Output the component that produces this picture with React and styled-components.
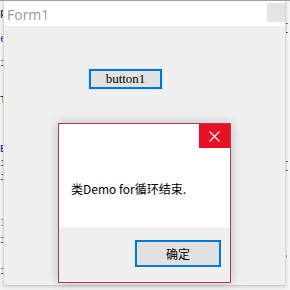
import React from "react";
import styled, { createGlobalStyle } from "styled-components";

const GlobalStyle = createGlobalStyle`
  body {
    margin: 0;
    background: #f4f4f4;
  }
`;

// code lines of the editor that peek out left of the form
const codeLines = [
  { gap: 0, text: "p", color: "#000" },
  { gap: 14, text: "e", color: "#1a1aa6" },
  { gap: 12, text: "i", color: "#1a1aa6" },
  { gap: 25, text: "T", color: "#000" },
  { gap: 37, text: "E", color: "#1a1aa6" },
  { gap: 2, text: "i", color: "#1a1aa6" },
  { gap: 2, text: "i", color: "#1a1aa6" },
  { gap: 34, text: "I", color: "#2b91af" },
  { gap: 5, text: "i", color: "#1a1aa6" },
  { gap: 19, text: "i", color: "#1a1aa6" },
];

// and the ones to the right of it
const rightLines = [
  { gap: 15, text: "[" },
  { gap: 126, text: "[" },
  { gap: 76, text: "." },
];

const App = () => {
  return (
    <>
      <GlobalStyle />
      <Screen>
        <Editor>
          <CodeColumn>
            {codeLines.map((line, i) => (
              <CodeLine key={i} gap={line.gap} color={line.color}>
                {line.text}
              </CodeLine>
            ))}
          </CodeColumn>
          <RightColumn>
            {rightLines.map((line, i) => (
              <CodeLine key={i} gap={line.gap} color="#222">
                {line.text}
              </CodeLine>
            ))}
          </RightColumn>
        </Editor>

        <FormWindow>
          <TitleBar>
            <Title>Form1</Title>
            <CloseBox />
          </TitleBar>
          <Client>
            <Button1>button1</Button1>
          </Client>
        </FormWindow>

        <Dialog>
          <DialogBody>
            <DialogHeader>
              <DialogClose>
                <svg width="11" height="11" viewBox="0 0 11 11">
                  <path d="M0.5 0.5 L10.5 10.5 M10.5 0.5 L0.5 10.5" stroke="#fff" strokeWidth="1.1" />
                </svg>
              </DialogClose>
            </DialogHeader>
            <Message>类Demo for循环结束.</Message>
          </DialogBody>
          <DialogFooter>
            <OkButton>确定</OkButton>
          </DialogFooter>
        </Dialog>
      </Screen>
    </>
  );
};

const Screen = styled.div`
  position: relative;
  width: 290px;
  height: 290px;
  overflow: hidden;
  background: #f4f4f4;
  border-top: 1px solid #a0a0a0;
  box-sizing: border-box;
`;

const Editor = styled.div`
  display: flex;
  justify-content: space-between;
  padding-top: 6px;
`;

const CodeColumn = styled.div`
  display: flex;
  flex-direction: column;
`;

const RightColumn = styled.div`
  display: flex;
  flex-direction: column;
  padding-right: 1px;
`;

const CodeLine = styled.div`
  margin-top: ${(props) => props.gap}px;
  height: 12px;
  font-family: "Liberation Mono", monospace;
  font-size: 11px;
  line-height: 12px;
  color: ${(props) => props.color};
`;

const FormWindow = styled.div`
  position: absolute;
  left: 3px;
  top: 0;
  width: 283px;
  height: 285px;
  display: flex;
  flex-direction: column;
  background: #f0f0f0;
  border-left: 1px solid #d6d6d6;
  border-right: 1px solid #d6d6d6;
  border-bottom: 1px solid #d0d0d0;
  box-sizing: border-box;
  box-shadow: 0 1px 3px rgba(0, 0, 0, 0.15);
`;

const TitleBar = styled.div`
  height: 25px;
  flex-shrink: 0;
  display: flex;
  align-items: center;
  background: #fff;
  padding-left: 3px;
`;

const Title = styled.span`
  font-family: "Open Sans", "Noto Sans", sans-serif;
  font-size: 14px;
  color: #9a9a9a;
  margin-top: 1px;
`;

const CloseBox = styled.div`
  margin-left: auto;
  margin-top: 2px;
  width: 18px;
  height: 19px;
  background: #e4e4e4;
  align-self: flex-start;
`;

const Client = styled.div`
  flex: 1;
  display: flex;
  align-items: flex-start;
  padding: 43px 0 0 85px;
`;

const Button1 = styled.div`
  width: 73px;
  height: 20px;
  box-sizing: border-box;
  border: 2px solid #0078d7;
  background: #e1e1e1;
  display: flex;
  align-items: center;
  justify-content: center;
  font-family: "Liberation Serif", serif;
  font-size: 13px;
  color: #000;
  box-shadow: 0 0 0 1px #cde6f7;
`;

const Dialog = styled.div`
  position: absolute;
  left: 58px;
  top: 122px;
  width: 173px;
  height: 160px;
  box-sizing: border-box;
  border: 1px solid #b0395c;
  display: flex;
  flex-direction: column;
  box-shadow: 0 0 10px rgba(0, 0, 0, 0.22);
`;

const DialogBody = styled.div`
  flex: 1;
  background: #fff;
  display: flex;
  flex-direction: column;
`;

const DialogHeader = styled.div`
  display: flex;
  justify-content: flex-end;
`;

const DialogClose = styled.div`
  width: 31px;
  height: 24px;
  background: #e81123;
  display: flex;
  align-items: center;
  justify-content: center;
`;

const Message = styled.div`
  margin-top: 33px;
  padding-left: 12px;
  font-family: "Noto Sans CJK SC", "Noto Sans", sans-serif;
  font-size: 12px;
  line-height: 16px;
  color: #000;
`;

const DialogFooter = styled.div`
  height: 55px;
  flex-shrink: 0;
  background: #f0f0f0;
  display: flex;
  justify-content: flex-end;
  align-items: flex-start;
  padding: 13px 9px 0 0;
  box-sizing: border-box;
`;

const OkButton = styled.div`
  width: 86px;
  height: 27px;
  box-sizing: border-box;
  border: 2px solid #0078d7;
  background: #e1e1e1;
  display: flex;
  align-items: center;
  justify-content: center;
  font-family: "Noto Sans CJK SC", sans-serif;
  font-size: 12px;
  color: #000;
`;

export default App;
